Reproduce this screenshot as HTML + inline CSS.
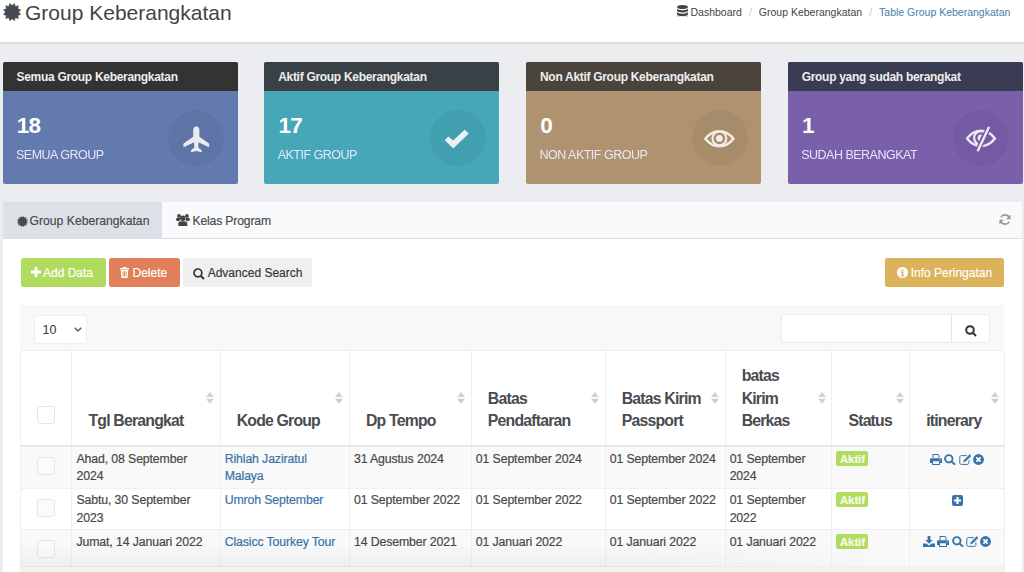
<!DOCTYPE html>
<html><head><meta charset="utf-8">
<style>
*{box-sizing:border-box;margin:0;padding:0}
html,body{width:1024px;height:572px;overflow:hidden}
body{background:#ecedf0;font-family:"Liberation Sans",sans-serif;color:#333;position:relative}
.abs{position:absolute}
#hdr{left:0;top:0;width:1024px;height:44px;background:#fff;border-bottom:2px solid #dddee2}
#title{left:25px;top:1px;font-size:21px;color:#444;white-space:nowrap;line-height:24px}
#bc{left:677px;top:5.5px;font-size:10.5px;color:#444;white-space:nowrap;line-height:12px}
#bc .sep{color:#c8c8c8;padding:0 7px}
#bc .act{color:#4580ae}
.card{top:61.5px;width:235px;height:122px;border-radius:2px;overflow:hidden}
.card .ch{height:29.5px;color:#eee;font-weight:bold;font-size:12px;letter-spacing:-0.3px;padding:9px 0 0 14px;white-space:nowrap;line-height:12px}
.card .num{position:absolute;left:14.3px;top:53px;color:#fff;font-weight:bold;font-size:22.5px;letter-spacing:-0.7px;line-height:22px}
.card .lbl{position:absolute;left:13.5px;top:87.5px;color:#eef;font-size:12.5px;letter-spacing:-0.5px;line-height:12px;white-space:nowrap;opacity:.92}
.card .circ{position:absolute;left:165.5px;top:48px;width:56px;height:56px;border-radius:50%;background:rgba(0,0,0,.042)}
.card svg{position:absolute}
#box{left:2.5px;top:202px;width:1019.5px;height:380px;background:#fff}
#tabs{left:0;top:0;width:1019.5px;height:37px;background:#f8fafc;border-bottom:1.5px solid #dcdfe3}
#tab1{left:0;top:0;width:159px;height:35.5px;background:#dde1e7}
.tabt{top:12px;font-size:12.2px;color:#484848;-webkit-text-stroke:0.15px currentColor;white-space:nowrap;line-height:14px}
.btn{-webkit-text-stroke:0.15px currentColor;top:56px;height:28.5px;border-radius:2.5px;color:#fff;font-size:12px;line-height:30.5px;white-space:nowrap}
#wrap{left:17.7px;top:103px;width:984px;height:300px;background:#f8f8f8}
#sel{left:13.4px;top:9.5px;width:53px;height:29px;background:#fff;border:1px solid #eeeeee;border-radius:3px;font-size:12.5px;line-height:29px;padding-left:8px;color:#333}
#srch{left:761px;top:9px;width:209px;height:29px;background:#fff;border:1px solid #ebebeb;border-radius:3px}
table{position:absolute;left:0;top:44.5px;border-collapse:collapse;table-layout:fixed;width:984px}
th,td{border:1px solid #f0f0f0;vertical-align:top;text-align:left}
th{background:#fff;font-size:15.8px;font-weight:bold;color:#4a4c50;letter-spacing:-0.8px;line-height:22.7px;vertical-align:bottom;padding:0 0 12px 16px;position:relative}
thead tr{height:96px}
thead th{border-bottom:2px solid #eaeaea}
td{font-size:12.3px;letter-spacing:-0.12px;line-height:17.4px;color:#484848;-webkit-text-stroke:0.2px currentColor;padding:4.5px 0 0 4px}
tbody tr.g td{background:#f9f9f9}
tbody tr.w td{background:#fff}
tbody tr.b4 td{background:#f3f3f3}
tr.r1 td{padding-top:4px}
tr.r2 td{padding-top:3.2px}
a{color:#3a72a8;text-decoration:none}
.lab{display:inline-block;background:#b2dc60;color:#f4fbe6;font-weight:bold;font-size:11.5px;line-height:17px;height:15.5px;padding:0 3.5px;border-radius:2px;margin-left:0px;position:relative;top:-0.5px}
.cb{position:absolute;width:18px;height:18px;border:1px solid #e6e6e6;border-radius:3px;background:#fbfbfb}
.sort{position:absolute;right:5.5px;top:41.5px;width:8px;height:12px}
#shade{left:20.2px;top:543px;width:984px;height:24px;background:linear-gradient(rgba(0,0,0,0),rgba(0,0,0,.045));-webkit-mask-image:linear-gradient(to right,#000 0%,#000 62%,transparent 92%)}
#bot{left:20px;top:567px;width:985px;height:5px;background:#f4f4f4}
</style></head><body>
<div id="hdr" class="abs"></div>
<!-- title icon cog -->
<svg class="abs" style="left:2.7px;top:3px" width="18.2" height="18.2" viewBox="0 0 18.2 18.2"><path fill="#454a52" stroke="#454a52" stroke-width=".5" stroke-linejoin="round" d="M11.43 0.41 L12.40 3.38 L15.46 2.74 L14.82 5.80 L17.79 6.77 L15.70 9.10 L17.79 11.43 L14.82 12.40 L15.46 15.46 L12.40 14.82 L11.43 17.79 L9.10 15.70 L6.77 17.79 L5.80 14.82 L2.74 15.46 L3.38 12.40 L0.41 11.43 L2.50 9.10 L0.41 6.77 L3.38 5.80 L2.74 2.74 L5.80 3.38 L6.77 0.41 L9.10 2.50Z"/></svg>
<div id="title" class="abs">Group Keberangkatan</div>
<div id="bc" class="abs">
<svg style="position:absolute;left:0;top:-1px" width="11" height="12.5" viewBox="0 0 11 12.5"><g fill="#444"><ellipse cx="5.5" cy="2" rx="5.5" ry="2"/><path d="M0 3.2c0 1.1 2.5 2 5.5 2s5.5-.9 5.5-2v2.4c0 1.1-2.5 2-5.5 2S0 6.7 0 5.6z"/><path d="M0 6.8c0 1.1 2.5 2 5.5 2s5.5-.9 5.5-2v2.4c0 1.1-2.5 2-5.5 2S0 10.3 0 9.2z"/><path d="M0 10.2c0 1.1 2.5 2 5.5 2s5.5-.9 5.5-2v.3c0 1.1-2.5 2-5.5 2S0 11.6 0 10.5z"/></g></svg>
<span style="padding-left:13.5px">Dashboard</span><span class="sep">/</span><span>Group Keberangkatan</span><span class="sep">/</span><span class="act">Table Group Keberangkatan</span></div>

<!-- cards -->
<div class="card abs" style="left:2.5px;background:#637aae">
 <div class="ch" style="background:#333">Semua Group Keberangkatan</div>
 <div class="num">18</div><div class="lbl">SEMUA GROUP</div><div class="circ"></div>
 <svg style="left:180px;top:64px" width="27" height="27" viewBox="0 0 27 27"><path fill="#e9ebf2" d="M13.3 0.4C15.2 0.4 16.4 1.8 16.4 3.6L16.4 10.8L26 17.6Q26.4 18 26.2 19L26 21.2L16 16.6L15.4 16.6L15.4 21.8L18.4 24Q18.8 24.5 18.6 26.2L13.3 25L8 26.2Q7.8 24.5 8.2 24L11.2 21.8L11.2 16.6L10.6 16.6L0.6 21.2L0.4 19Q0.2 18 0.6 17.6L10.2 10.8L10.2 3.6C10.2 1.8 11.4 0.4 13.3 0.4Z"/></svg>
</div>
<div class="card abs" style="left:264.2px;background:#45a7b7">
 <div class="ch" style="background:#394147">Aktif Group Keberangkatan</div>
 <div class="num">17</div><div class="lbl">AKTIF GROUP</div><div class="circ"></div>
 <svg style="left:180px;top:67px" width="26" height="21" viewBox="0 0 26 21"><path fill="#e6f2f4" d="M0.8 11.2L4.2 7.6L9.2 11.5L20.7 0.7L24.7 4.4L9.2 19.6Z"/></svg>
</div>
<div class="card abs" style="left:526px;background:#af9370">
 <div class="ch" style="background:#4a443d">Non Aktif Group Keberangkatan</div>
 <div class="num">0</div><div class="lbl">NON AKTIF GROUP</div><div class="circ"></div>
 <svg style="left:178px;top:68px" width="31" height="18" viewBox="0 0 31 18"><g fill="none" stroke="#f3ece4"><path stroke-width="2.4" d="M1.4 8.8C6 2.8 10.5 1.2 15.4 1.2S24.8 2.8 29.4 8.8C24.8 14.8 20.3 16.4 15.4 16.4S6 14.8 1.4 8.8Z"/><circle cx="15.4" cy="8.4" r="6.9" stroke-width="2.2"/></g><circle cx="15.4" cy="8.4" r="3.4" fill="#f3ece4"/></svg>
</div>
<div class="card abs" style="left:787.7px;background:#7a5fab">
 <div class="ch" style="background:#393c52">Group yang sudah berangkat</div>
 <div class="num">1</div><div class="lbl">SUDAH BERANGKAT</div><div class="circ"></div>
 <svg style="left:177px;top:64px" width="32" height="26" viewBox="0 0 32 26"><defs><mask id="m4"><rect width="32" height="26" fill="#fff"/><path d="M24.1 0.7L12.6 25.3" stroke="#000" stroke-width="5"/></mask><clipPath id="c4"><path d="M0 0H21L9 26H0z"/></clipPath></defs><g mask="url(#m4)"><path fill="none" stroke="#ece6f4" stroke-width="2.4" d="M2.1 12.4C6.7 6.4 11.2 4.8 16 4.8S25.3 6.4 29.9 12.4C25.3 18.4 20.8 20 16 20S6.7 18.4 2.1 12.4Z"/><g clip-path="url(#c4)"><circle cx="16" cy="12" r="6.9" fill="none" stroke="#ece6f4" stroke-width="2.2"/><circle cx="16" cy="12" r="3.4" fill="#ece6f4"/></g></g><path d="M24.1 0.7L12.6 25.3" stroke="#ece6f4" stroke-width="2.4"/></svg>
</div>

<div id="box" class="abs">
 <div id="tabs" class="abs">
  <div id="tab1" class="abs"></div>
  <svg class="abs" style="left:14px;top:13.5px" width="11" height="11" viewBox="0 0 18.2 18.2"><path fill="#454a52" stroke="#454a52" stroke-width=".5" stroke-linejoin="round" d="M11.43 0.41 L12.40 3.38 L15.46 2.74 L14.82 5.80 L17.79 6.77 L15.70 9.10 L17.79 11.43 L14.82 12.40 L15.46 15.46 L12.40 14.82 L11.43 17.79 L9.10 15.70 L6.77 17.79 L5.80 14.82 L2.74 15.46 L3.38 12.40 L0.41 11.43 L2.50 9.10 L0.41 6.77 L3.38 5.80 L2.74 2.74 L5.80 3.38 L6.77 0.41 L9.10 2.50Z"/></svg>
  <div class="tabt abs" style="left:27px">Group Keberangkatan</div>
  <svg class="abs" style="left:173.4px;top:11.9px" width="14" height="12.5" viewBox="0 0 14 12.5"><g fill="#444"><circle cx="3" cy="1.9" r="1.9"/><circle cx="10.9" cy="1.9" r="1.9"/><ellipse cx="2.1" cy="5.3" rx="2.1" ry="1.9"/><ellipse cx="11.7" cy="5.3" rx="2.1" ry="1.9"/><circle cx="6.8" cy="4.2" r="2.7"/><path d="M2.3 12V9.6C2.3 8 3.6 7.2 5 7.2h3.6c1.4 0 2.7.8 2.7 2.4V12z"/></g></svg>
  <div class="tabt abs" style="left:190px;letter-spacing:-0.17px">Kelas Program</div>
  <svg class="abs" style="left:996px;top:11.5px" width="12" height="11" viewBox="0 0 12 11"><g fill="none" stroke="#999" stroke-width="1.6"><path d="M10.5 4.2A4.8 4.8 0 0 0 1.8 3.2"/><path d="M1.5 6.8a4.8 4.8 0 0 0 8.7 1"/></g><path fill="#999" d="M11.6 0.6v4.6H7z M0.4 10.4V5.8H5z"/></svg>
 </div>
 <div class="btn abs" style="left:18px;width:85.5px;background:#b1db5e"><svg style="position:absolute;left:10px;top:9px" width="10" height="10" viewBox="0 0 10 10"><path fill="#fff" d="M3.6 0h2.8v3.6H10v2.8H6.4V10H3.6V6.4H0V3.6h3.6z"/></svg><span style="position:absolute;left:22.5px">Add Data</span></div>
 <div class="btn abs" style="left:106px;width:71px;background:#e07f59"><svg style="position:absolute;left:11px;top:8.5px" width="9" height="11" viewBox="0 0 9 11"><path fill="#fff" fill-rule="evenodd" d="M3 0h3l.5 1H9v1.5H0V1h2.5zM.8 3h7.4l-.5 7.2c0 .5-.4.8-.9.8H2.2c-.5 0-.9-.3-.9-.8zM2.6 4.2v5.4h.9V4.2zM4.1 4.2v5.4h.9V4.2zM5.6 4.2v5.4h.9V4.2z"/></svg><span style="position:absolute;left:24px">Delete</span></div>
 <div class="btn abs" style="left:180.2px;width:129px;background:#efefef;color:#333"><svg style="position:absolute;left:10.5px;top:9.5px" width="12" height="12" viewBox="0 0 12 12"><g fill="none" stroke="#333" stroke-width="1.7"><circle cx="4.9" cy="4.9" r="3.9"/><path d="M7.7 7.7l3.3 3.3" stroke-width="2"/></g></svg><span style="position:absolute;left:25px">Advanced Search</span></div>
 <div class="btn abs" style="left:882.7px;width:119px;background:#dcb35b"><svg style="position:absolute;left:11.7px;top:8.8px" width="11" height="11" viewBox="0 0 11 11"><circle cx="5.5" cy="5.5" r="5.5" fill="#fff"/><path fill="#dcb35b" d="M4.6 2.2h1.8v1.6H4.6zM3.8 4.6h2.6v3.8h1v1H3.8v-1h1V5.6h-1z"/></svg><span style="position:absolute;left:25.5px">Info Peringatan</span></div>

 <div id="wrap" class="abs">
  <div id="sel" class="abs">10<svg style="position:absolute;left:39.5px;top:11.5px" width="8" height="5" viewBox="0 0 8 5"><path fill="none" stroke="#555" stroke-width="1.3" d="M.8.8L4 4 7.2.8"/></svg></div>
  <div id="srch" class="abs"><div style="position:absolute;left:169px;top:0;width:1px;height:27px;background:#e6e6e6"></div><svg style="position:absolute;left:183px;top:9.5px" width="12" height="12" viewBox="0 0 12 12"><g fill="none" stroke="#333" stroke-width="2"><circle cx="5" cy="5" r="3.8"/><path d="M7.8 7.8l3.2 3.2"/></g></svg></div>
  <table>
   <colgroup><col style="width:51.3px"><col style="width:148.2px"><col style="width:129.3px"><col style="width:121.9px"><col style="width:133.9px"><col style="width:119.9px"><col style="width:106.8px"><col style="width:77.8px"><col style="width:94.9px"></colgroup>
   <thead><tr>
    <th><div class="cb" style="left:15.5px;top:55.5px;background:#fff"></div></th>
    <th>Tgl Berangkat<svg class="sort" viewBox="0 0 8 12"><path fill="#d0d0d0" d="M4 0L8 5H0zM0 6.8h8L4 12z"/></svg></th><th>Kode Group<svg class="sort" viewBox="0 0 8 12"><path fill="#d0d0d0" d="M4 0L8 5H0zM0 6.8h8L4 12z"/></svg></th><th>Dp Tempo<svg class="sort" viewBox="0 0 8 12"><path fill="#d0d0d0" d="M4 0L8 5H0zM0 6.8h8L4 12z"/></svg></th><th>Batas<br>Pendaftaran<svg class="sort" viewBox="0 0 8 12"><path fill="#d0d0d0" d="M4 0L8 5H0zM0 6.8h8L4 12z"/></svg></th><th>Batas Kirim<br>Passport<svg class="sort" viewBox="0 0 8 12"><path fill="#d0d0d0" d="M4 0L8 5H0zM0 6.8h8L4 12z"/></svg></th><th>batas<br>Kirim<br>Berkas<svg class="sort" viewBox="0 0 8 12"><path fill="#d0d0d0" d="M4 0L8 5H0zM0 6.8h8L4 12z"/></svg></th><th>Status<svg class="sort" viewBox="0 0 8 12"><path fill="#d0d0d0" d="M4 0L8 5H0zM0 6.8h8L4 12z"/></svg></th><th>itinerary<svg class="sort" viewBox="0 0 8 12"><path fill="#d0d0d0" d="M4 0L8 5H0zM0 6.8h8L4 12z"/></svg></th>
   </tr></thead>
   <tbody>
    <tr class="g r1" style="height:42.5px"><td style="position:relative"><div class="cb" style="left:15.5px;top:9.5px"></div></td><td>Ahad, 08 September<br>2024</td><td><a>Rihlah Jaziratul<br>Malaya</a></td><td>31 Agustus 2024</td><td>01 September 2024</td><td>01 September 2024</td><td>01 September<br>2024</td><td><span class="lab">Aktif</span></td><td style="position:relative"><div style="position:absolute;left:20px;top:7px;display:flex;gap:2.2px"><svg width="12" height="11" viewBox="0 0 12 11"><path fill="#3573ac" fill-rule="evenodd" d="M2.5 0h5.5l1.5 1.5V4H2.5zM3.5 1v3h5V1.8L7.7 1zM0 5.5C0 4.7.6 4.2 1.3 4.2h9.4c.7 0 1.3.5 1.3 1.3V9h-2v2H2V9H0zM3 7.2v2.8h6V7.2zM10 5.2a.6.6 0 1 0 0 1.2.6.6 0 1 0 0-1.2z"/></svg><svg width="12" height="11" viewBox="0 0 12 11"><g fill="none" stroke="#3573ac" stroke-width="1.9"><circle cx="4.8" cy="4.8" r="3.7"/><path d="M7.5 7.5l3.6 3.2"/></g></svg><svg width="12.5" height="11" viewBox="0 0 12.5 11"><path fill="none" stroke="#3573ac" stroke-width="1" d="M7.8 1.6H2.3C1.4 1.6.8 2.2.8 3.1v5.8c0 .9.6 1.5 1.5 1.5h6.1c.9 0 1.5-.6 1.5-1.5V6.2"/><path fill="#3573ac" d="M10.7.3l1.6 1.6-5.9 5.9-2.2.6.6-2.2z"/><path fill="#fff" d="M4.9 6.5l.8.8-.9.3z"/></svg><svg width="11" height="11" viewBox="0 0 11 11"><circle cx="5.5" cy="5.5" r="5.4" fill="#3573ac"/><path stroke="#fff" stroke-width="1.8" d="M3.4 3.4l4.2 4.2M7.6 3.4L3.4 7.6"/></svg></div></td></tr>
    <tr class="w r2" style="height:40.5px"><td style="position:relative"><div class="cb" style="left:15.5px;top:9.5px"></div></td><td>Sabtu, 30 September<br>2023</td><td><a>Umroh September</a></td><td>01 September 2022</td><td>01 September 2022</td><td>01 September 2022</td><td>01 September<br>2022</td><td><span class="lab">Aktif</span></td><td style="position:relative"><div style="position:absolute;left:42px;top:6px;display:flex;gap:2.2px"><svg width="11" height="11" viewBox="0 0 11 11"><rect width="11" height="11" rx="2" fill="#3573ac"/><path fill="#fff" d="M4.4 2h2.2v2.4H9v2.2H6.6V9H4.4V6.6H2V4.4h2.4z"/></svg></div></td></tr>
    <tr class="g" style="height:37.5px"><td style="position:relative"><div class="cb" style="left:15.5px;top:10.5px"></div></td><td>Jumat, 14 Januari 2022</td><td><a>Clasicc Tourkey Tour</a></td><td>14 Desember 2021</td><td>01 Januari 2022</td><td>01 Januari 2022</td><td>01 Januari 2022</td><td><span class="lab">Aktif</span></td><td style="position:relative"><div style="position:absolute;left:13px;top:6.5px;display:flex;gap:2.2px"><svg width="12" height="11" viewBox="0 0 12 11"><path fill="#3573ac" d="M4.6 0h2.8v4h2.3L6 7.8 2.3 4h2.3zM0 7.4h3.6L6 9.8l2.4-2.4H12V11H0z"/></svg><svg width="12" height="11" viewBox="0 0 12 11"><path fill="#3573ac" fill-rule="evenodd" d="M2.5 0h5.5l1.5 1.5V4H2.5zM3.5 1v3h5V1.8L7.7 1zM0 5.5C0 4.7.6 4.2 1.3 4.2h9.4c.7 0 1.3.5 1.3 1.3V9h-2v2H2V9H0zM3 7.2v2.8h6V7.2zM10 5.2a.6.6 0 1 0 0 1.2.6.6 0 1 0 0-1.2z"/></svg><svg width="12" height="11" viewBox="0 0 12 11"><g fill="none" stroke="#3573ac" stroke-width="1.9"><circle cx="4.8" cy="4.8" r="3.7"/><path d="M7.5 7.5l3.6 3.2"/></g></svg><svg width="12.5" height="11" viewBox="0 0 12.5 11"><path fill="none" stroke="#3573ac" stroke-width="1" d="M7.8 1.6H2.3C1.4 1.6.8 2.2.8 3.1v5.8c0 .9.6 1.5 1.5 1.5h6.1c.9 0 1.5-.6 1.5-1.5V6.2"/><path fill="#3573ac" d="M10.7.3l1.6 1.6-5.9 5.9-2.2.6.6-2.2z"/><path fill="#fff" d="M4.9 6.5l.8.8-.9.3z"/></svg><svg width="11" height="11" viewBox="0 0 11 11"><circle cx="5.5" cy="5.5" r="5.4" fill="#3573ac"/><path stroke="#fff" stroke-width="1.8" d="M3.4 3.4l4.2 4.2M7.6 3.4L3.4 7.6"/></svg></div></td></tr>
    <tr class="w b4" style="height:40px"><td></td><td></td><td></td><td></td><td></td><td></td><td></td><td></td><td></td></tr>
   </tbody>
  </table>
 </div>
</div>
<div id="shade" class="abs"></div>
</body></html>
